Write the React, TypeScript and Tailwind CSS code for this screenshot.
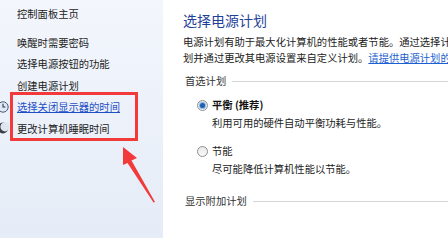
import React from 'react';

const font = { fontFamily: '"Noto Sans CJK SC", "Noto Sans", sans-serif' };

function ClockIcon() {
  return (
    <svg width="12" height="12" viewBox="0 0 12 12">
      <circle cx="6" cy="6" r="5.2" fill="#dfe8f4" stroke="#4a5e7a" strokeWidth="1" />
      <path d="M6 2.8 V6 H8.4" stroke="#2b3b55" strokeWidth="1.1" fill="none" />
    </svg>
  );
}

function MoonIcon() {
  return (
    <svg width="12" height="12" viewBox="0 0 12 12">
      <circle cx="6" cy="6" r="5.4" fill="#3a3f48" />
      <circle cx="8" cy="4.8" r="4.6" fill="#dfe6f0" />
    </svg>
  );
}

function Radio({ checked }: { checked?: boolean }) {
  return (
    <span className="flex h-[11px] w-[11px] shrink-0 items-center justify-center rounded-full border border-[#8f8f8f] bg-gradient-to-b from-[#e8e8e8] to-[#fafafa]">
      {checked && <span className="h-[5px] w-[5px] rounded-full bg-[#1d5fb0] shadow-[0_0_1px_1px_#7fb0e0]" />}
    </span>
  );
}

function SideItem({ text, icon, link }: { text: string; icon?: React.ReactNode; link?: boolean }) {
  return (
    <div className="flex items-center leading-[21.4px]">
      <span className="flex w-[17px] shrink-0 items-center">
        <span className="-ml-[3px] flex">{icon}</span>
      </span>
      <span className={link ? 'text-[#1d4fc4] underline' : 'text-[#222]'}>{text}</span>
    </div>
  );
}

export default function App() {
  return (
    <div className="relative flex h-[238px] w-[448px] overflow-hidden bg-white text-[10.3px]" style={font}>
      {/* sidebar */}
      <div className="w-[163px] shrink-0 bg-gradient-to-b from-[#f3f6fc] to-[#e5ecf7] pt-[3px]">
        <div className="pl-[17px] leading-[21px] text-[#222]">控制面板主页</div>
        <div className="mt-[8px]">
          <SideItem text="唤醒时需要密码" />
          <SideItem text="选择电源按钮的功能" />
          <SideItem text="创建电源计划" />
          <SideItem text="选择关闭显示器的时间" icon={<ClockIcon />} link />
          <SideItem text="更改计算机睡眠时间" icon={<MoonIcon />} />
        </div>
      </div>

      {/* main content */}
      <div className="min-w-0 flex-1 overflow-hidden pl-[20px] pt-[10px] text-[#222]">
        <div className="text-[14px] leading-[20px] text-[#1f3f99]">选择电源计划</div>
        <div className="mt-[4px] whitespace-nowrap leading-[16px]">
          <div>电源计划有助于最大化计算机的性能或者节能。通过选择计划并通过</div>
          <div>
            划并通过更改其电源设置来自定义计划。<span className="text-[#1d5fd0] underline">请提供电源计划的详细信息</span>
          </div>
        </div>

        <div className="ml-[2px] mt-[7px] flex items-center gap-[6px] leading-[16px] text-[#333]">
          <span className="whitespace-nowrap">首选计划</span>
          <span className="h-px flex-1 bg-[#d5d5d5]" />
        </div>

        <div className="ml-[14px] mt-[7px]">
          <div className="flex items-center gap-[4px] leading-[18px]">
            <Radio checked />
            <span className="font-bold text-[#111]">平衡 (推荐)</span>
          </div>
          <div className="pl-[15px] leading-[18px]">利用可用的硬件自动平衡功耗与性能。</div>

          <div className="mt-[10px] flex items-center gap-[4px] leading-[18px]">
            <Radio />
            <span>节能</span>
          </div>
          <div className="pl-[15px] leading-[17px]">尽可能降低计算机性能以节能。</div>
        </div>

        <div className="ml-[2px] mt-[16px] flex items-center gap-[6px] leading-[16px] text-[#333]">
          <span className="whitespace-nowrap">显示附加计划</span>
          <span className="h-px flex-1 bg-[#d5d5d5]" />
        </div>
      </div>

      {/* annotation overlay */}
      <div className="absolute left-[10px] top-[92px] h-[49px] w-[128px] border-[3px] border-[#f23a3a]" />
      <svg className="absolute left-0 top-0" width="448" height="238" viewBox="0 0 448 238">
        <path d="M123 147 L137 158 L131.5 160.5 L155 202 L153.5 202.5 L127.5 163 L123 165 Z" fill="#f23a3a" />
      </svg>
    </div>
  );
}
